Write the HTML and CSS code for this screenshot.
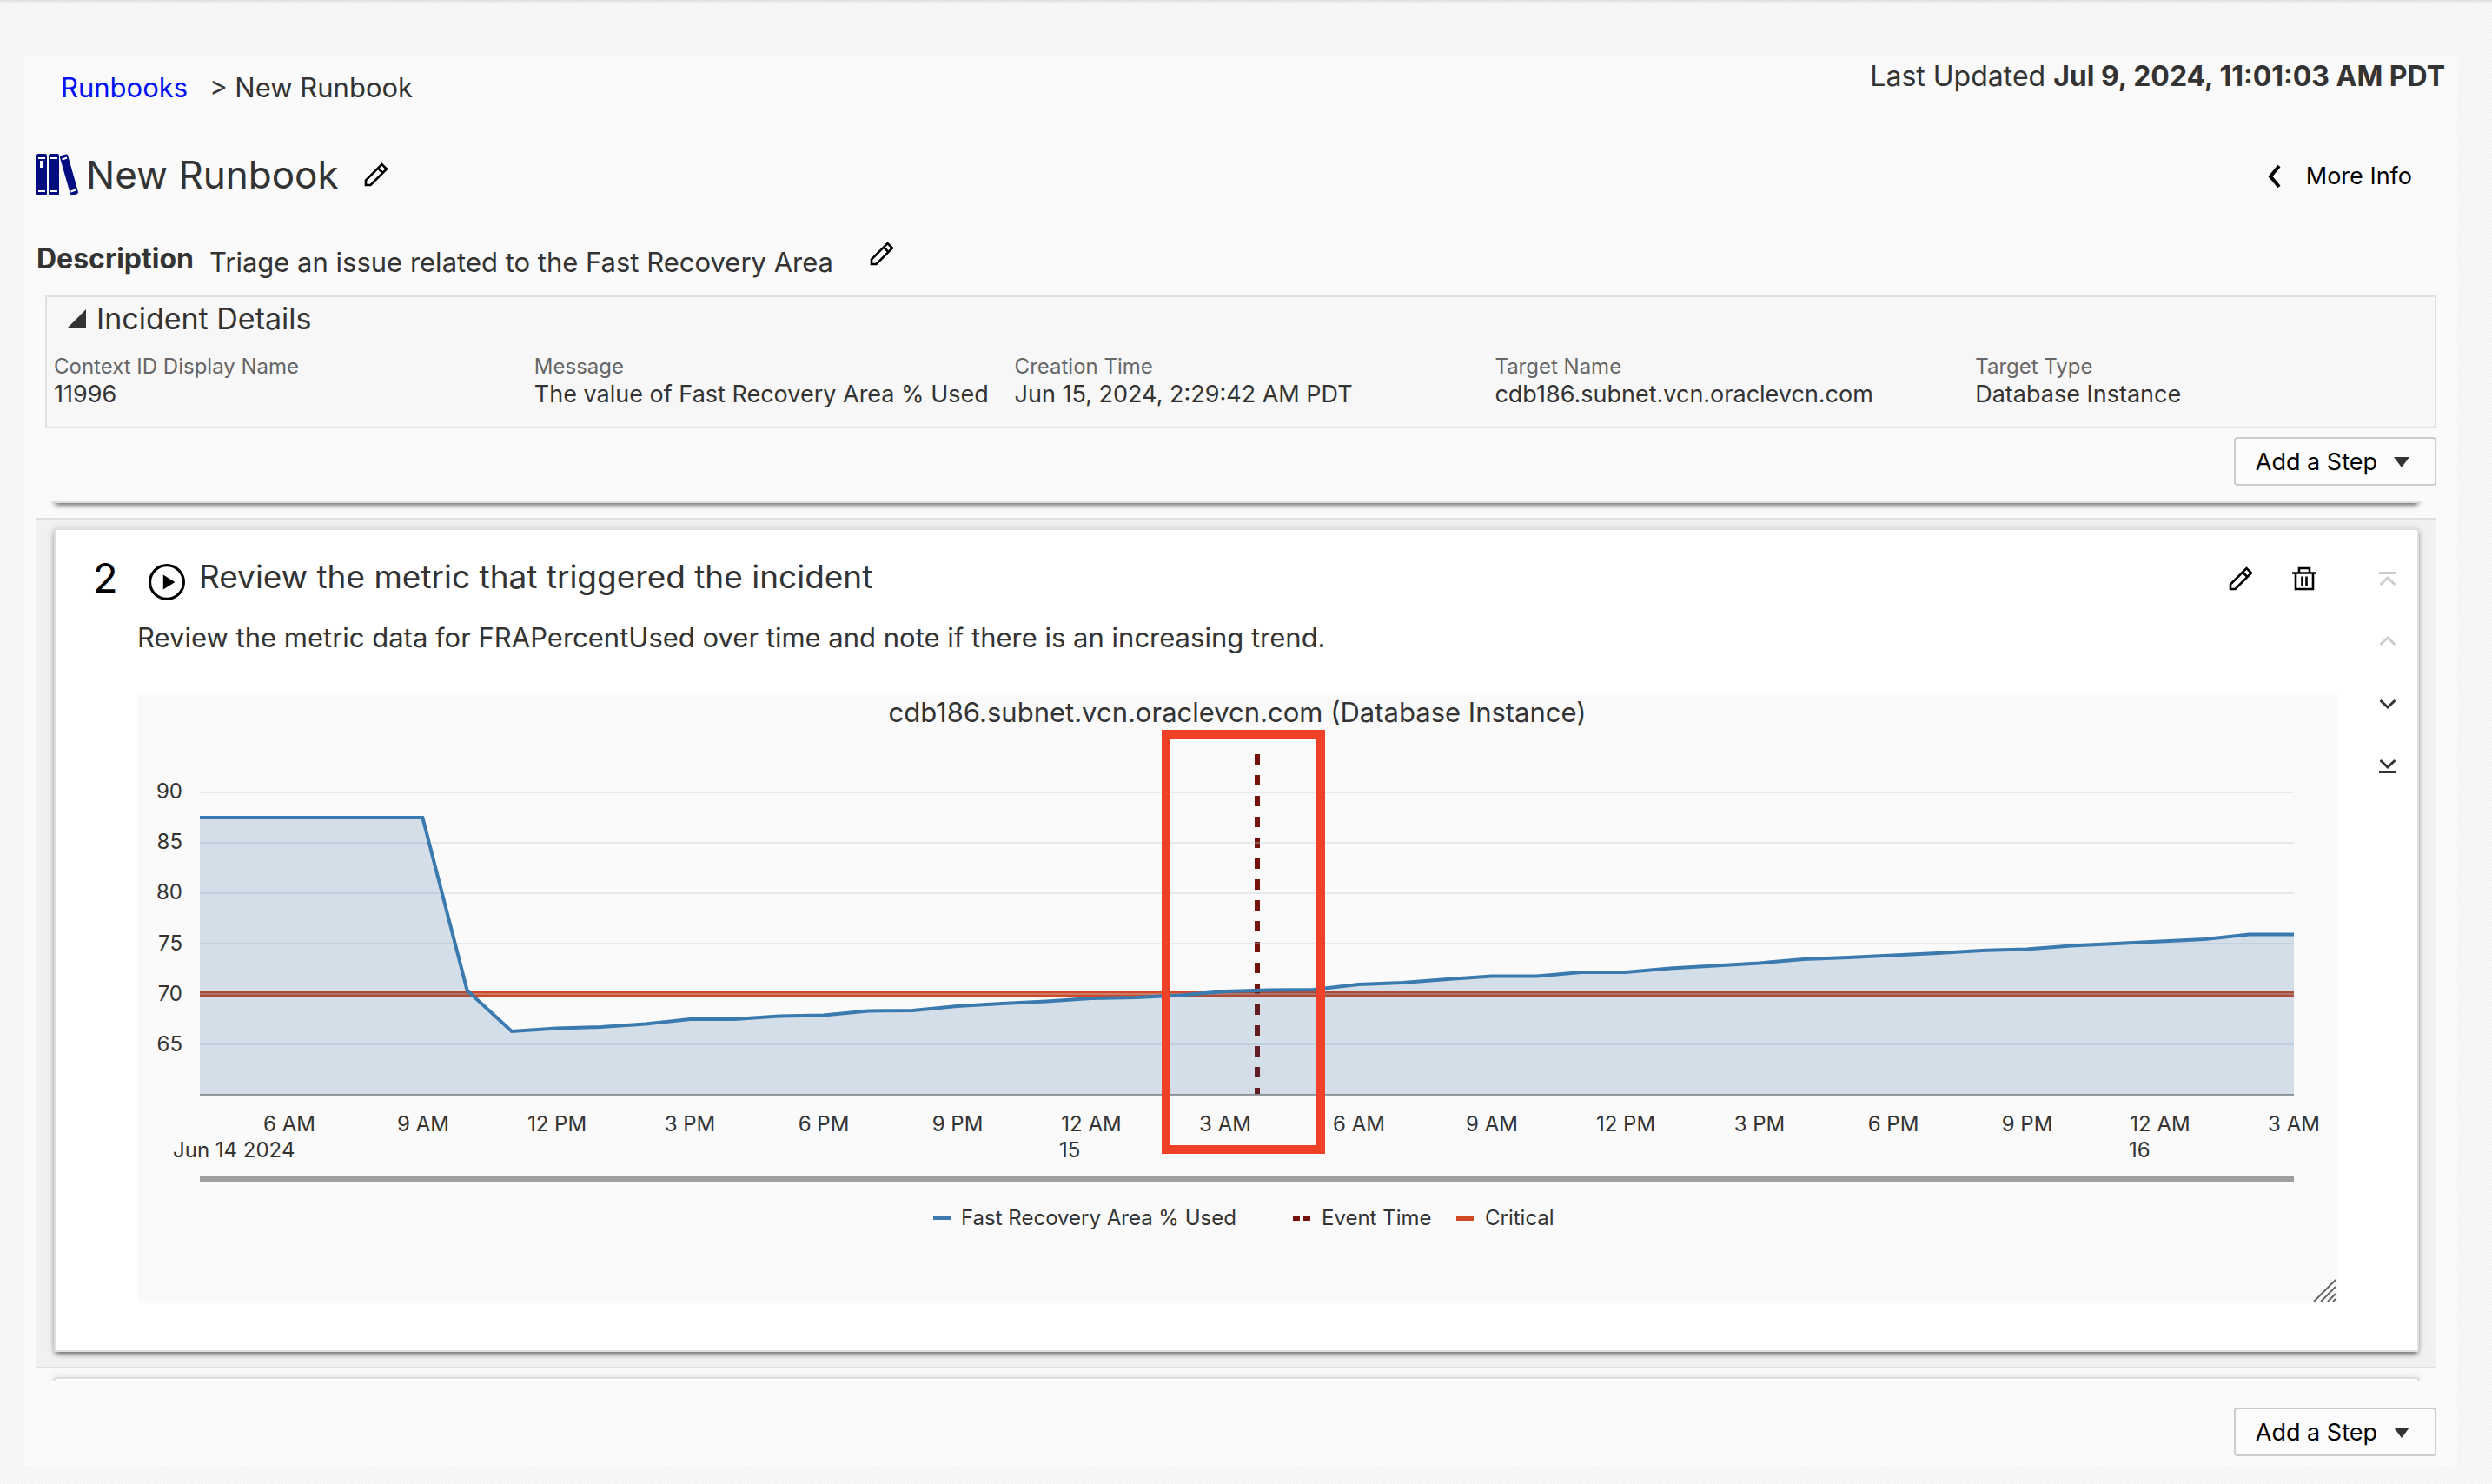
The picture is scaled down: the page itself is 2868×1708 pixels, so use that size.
FILE: index.html
```html
<!DOCTYPE html>
<html lang="en">
<head>
<meta charset="utf-8">
<meta name="viewport" content="width=device-width, initial-scale=1">
<title>New Runbook</title>
<link rel="stylesheet" href="styles.css">
</head>
<body>
<svg class="defs" aria-hidden="true">
  <symbol id="pencil" viewBox="0 0 28 28"><path d="M2 26V20.500L20.500 2L26 7.500L7.500 26ZM16 6.500L21.500 12" fill="none" stroke="#000" stroke-width="2.600"/></symbol>
  <symbol id="chevron" viewBox="0 0 20 20"><path d="M1.500 14L10 6L18.500 14" fill="none" stroke="currentColor" stroke-width="3"/></symbol>
  <symbol id="chevron-end" viewBox="0 0 20 20"><path d="M0 3.500H20M1.500 17L10 9L18.500 17" fill="none" stroke="currentColor" stroke-width="3"/></symbol>
</svg>
<main class="page">
  <header class="topbar">
    <nav class="crumbs" aria-label="Breadcrumb"><a class="crumb-link" href="#">Runbooks</a><span>&gt; New Runbook</span></nav>
    <p class="updated">Last Updated <strong>Jul 9, 2024, 11:01:03 AM PDT</strong></p>
  </header>

  <div class="title-row">
    <svg class="books" viewBox="0 0 48 48" aria-hidden="true">
      <g fill="#020d80"><rect width="12" height="48" rx="2"/><rect x="14" width="12" height="48" rx="2"/><path d="M28.500 2L34 0.500Q35.500 0 36 1.500L48 44Q48 45.500 47 46L41 48Q39.500 48 39 46.500L27 4.500Q26.500 2.500 28.500 2Z"/></g>
      <g fill="none" stroke="#fff" stroke-width="2"><path d="M2 5H10M16 5H24M2 43H10M16 43H24M29.500 6.500L35 4.500M39.500 43.500L45 41.500"/><path d="M6 8V16" stroke-width="4"/></g>
    </svg>
    <h1 class="title">New Runbook</h1>
    <button class="icon-btn" aria-label="Edit name"><svg class="icon"><use href="#pencil"/></svg></button>
    <button class="more-info"><svg class="back" viewBox="0 0 16 28" aria-hidden="true"><path d="M14 2L4 14L14 26" fill="none" stroke="#000" stroke-width="4"/></svg>More Info</button>
  </div>

  <div class="desc-row">
    <strong class="desc-label">Description</strong>
    <p class="desc-text">Triage an issue related to the Fast Recovery Area</p>
    <button class="icon-btn" aria-label="Edit description"><svg class="icon"><use href="#pencil"/></svg></button>
  </div>

  <section class="incident">
    <h2 class="incident-title"><svg class="disclose" viewBox="0 0 22 22" aria-hidden="true"><path d="M22 0V22H0Z" fill="#333"/></svg>Incident Details</h2>
    <dl class="facts">
      <div class="fact"><dt>Context ID Display Name</dt><dd>11996</dd></div>
      <div class="fact"><dt>Message</dt><dd>The value of Fast Recovery Area % Used</dd></div>
      <div class="fact"><dt>Creation Time</dt><dd>Jun 15, 2024, 2:29:42 AM PDT</dd></div>
      <div class="fact"><dt>Target Name</dt><dd>cdb186.subnet.vcn.oraclevcn.com</dd></div>
      <div class="fact"><dt>Target Type</dt><dd>Database Instance</dd></div>
    </dl>
  </section>

  <div class="actions"><button class="add-step">Add a Step<svg class="caret" viewBox="0 0 18 12" aria-hidden="true"><path d="M0 0H18L9 12Z" fill="#333"/></svg></button></div>

  <div class="steps">
    <div class="card card-prev"></div>
    <section class="step">
      <article class="card card-current">
        <div class="step-main">
          <header class="step-head">
            <span class="step-number">2</span>
            <button class="icon-btn play-btn" aria-label="Run step"><svg class="play" viewBox="0 0 40 40"><circle cx="20" cy="20" r="18.500" fill="none" stroke="#000" stroke-width="3"/><path d="M16 12L29 20L16 28Z"/></svg></button>
            <h2 class="step-title">Review the metric that triggered the incident</h2>
            <div class="step-tools">
              <button class="icon-btn" aria-label="Edit step"><svg class="icon"><use href="#pencil"/></svg></button>
              <button class="icon-btn" aria-label="Delete step"><svg class="icon" viewBox="0 0 28 28"><path d="M4 8V26H24V8M0 7.500H28M8 7V2H20V7M11.500 11.500V22M16.500 11.500V22" fill="none" stroke="#000" stroke-width="2.600"/></svg></button>
            </div>
          </header>
          <p class="step-text">Review the metric data for FRAPercentUsed over time and note if there is an increasing trend.</p>
          <figure class="chart-box">
            <svg class="chart" viewBox="158 800 2532 700" role="img" aria-label="Fast Recovery Area % Used over time">
              <text class="chart-title" x="1424" y="831" text-anchor="middle">cdb186.subnet.vcn.oraclevcn.com (Database Instance)</text>
              <path d="M230 1144H2640" stroke="#d14a25" stroke-width="6"/>
              <path d="M1447 868V1260" stroke="#75120c" stroke-width="6" stroke-dasharray="12 12"/>
              <path d="M230 912H2640M230 970H2640M230 1028H2640M230 1086H2640M230 1144H2640M230 1202H2640" stroke="#c4ced7" stroke-opacity=".38" stroke-width="2"/>
              <path d="M230 1260H2640" stroke="#9e9e9e" stroke-width="2"/>
              <g id="series"></g>
              <g class="tick" text-anchor="end">
                <text x="210" y="919">90</text><text x="210" y="977">85</text><text x="210" y="1035">80</text><text x="210" y="1094">75</text><text x="210" y="1152">70</text><text x="210" y="1210">65</text>
              </g>
              <g class="tick" text-anchor="middle">
                <text x="333" y="1302">6 AM</text><text x="487" y="1302">9 AM</text><text x="641" y="1302">12 PM</text><text x="794" y="1302">3 PM</text><text x="948" y="1302">6 PM</text><text x="1102" y="1302">9 PM</text><text x="1256" y="1302">12 AM</text><text x="1410" y="1302">3 AM</text><text x="1564" y="1302">6 AM</text><text x="1717" y="1302">9 AM</text><text x="1871" y="1302">12 PM</text><text x="2025" y="1302">3 PM</text><text x="2179" y="1302">6 PM</text><text x="2333" y="1302">9 PM</text><text x="2486" y="1302">12 AM</text><text x="2640" y="1302">3 AM</text>
              </g>
              <g class="tick"><text x="199" y="1332">Jun 14 2024</text><text x="1219" y="1332">15</text><text x="2450" y="1332">16</text></g>
              <path d="M230 1357H2640" stroke="#9e9e9e" stroke-width="6"/>
              <g class="tick">
                <path d="M1074 1402H1094" stroke="#3b7aae" stroke-width="4"/><text x="1106" y="1410">Fast Recovery Area % Used</text>
                <path d="M1488 1402H1508" stroke="#75120c" stroke-width="6" stroke-dasharray="8 4"/><text x="1521" y="1410">Event Time</text>
                <path d="M1676 1402H1696" stroke="#d14a25" stroke-width="6"/><text x="1709" y="1410">Critical</text>
              </g>
              <rect x="1342" y="845" width="178" height="478" fill="none" stroke="#ee4127" stroke-width="10"/>
              <path d="M2663 1498L2688 1473M2671 1498L2688 1481M2679 1498L2688 1489M2685 1498L2688 1495" stroke="#666" stroke-width="2"/>
            </svg>
          </figure>
        </div>
        <div class="rail">
          <button class="icon-btn" aria-label="Move to top" disabled><svg class="arrow"><use href="#chevron-end"/></svg></button>
          <button class="icon-btn" aria-label="Move up" disabled><svg class="arrow"><use href="#chevron"/></svg></button>
          <button class="icon-btn" aria-label="Move down"><svg class="arrow arrow-down"><use href="#chevron"/></svg></button>
          <button class="icon-btn" aria-label="Move to bottom"><svg class="arrow arrow-down"><use href="#chevron-end"/></svg></button>
        </div>
      </article>
    </section>
    <div class="card card-next"></div>
  </div>

  <div class="actions actions-bottom"><button class="add-step">Add a Step<svg class="caret" viewBox="0 0 18 12" aria-hidden="true"><path d="M0 0H18L9 12Z" fill="#333"/></svg></button></div>
</main>
<script src="chart.js"></script>
</body>
</html>
```
FILE: styles.css
```css
* { box-sizing: border-box; }

body {
  margin: 0;
  min-height: 100vh;
  padding: 64px 40px 20px 28px;
  color: #333;
  font: 31px/40px Inter, "Liberation Sans", sans-serif;
  background:
    linear-gradient(#dedede, transparent) 0 0 / 100% 4px no-repeat,
    linear-gradient(45deg, #f3f3f3 25%, #f9f9f9 25% 50%, #f3f3f3 50% 75%, #f9f9f9 75%) 0 0 / 4px 4px;
}

h1, h2, p, dl, dd, figure { margin: 0; font-weight: 400; }
button { font: inherit; color: #000; cursor: pointer; }
svg { display: block; }
.defs { position: absolute; width: 0; height: 0; }

.page { padding: 0 24px 12px 14px; background: #fafafa; }

.topbar { display: flex; justify-content: space-between; height: 96px; margin-right: -10px; }
.crumbs { display: flex; gap: 25px; padding: 17px 0 0 28px; }
.crumb-link { color: #0010f5; text-decoration: none; }
.updated { padding-top: 4px; font-size: 32px; }
strong { font-weight: 700; }

.icon-btn { padding: 0; border: 0; background: none; }
.icon { width: 28px; height: 28px; }

.title-row { display: flex; align-items: center; height: 82px; }
.books { width: 48px; height: 48px; }
.title { margin: 0 29px 0 9px; font-size: 44px; line-height: 56px; }
.more-info {
  display: flex;
  align-items: center;
  gap: 29px;
  margin-left: auto;
  padding: 3px 28px 0 0;
  border: 0;
  background: none;
  font-size: 27px;
}
.back { width: 16px; height: 28px; }

.desc-row { display: flex; align-items: flex-start; height: 98px; padding-top: 36px; }
.desc-label { margin-right: 18px; font-size: 32px; }
.desc-text { padding-top: 4px; margin-right: 42px; }

.incident { height: 153px; margin-left: 10px; border: 2px solid #e0e0e0; background: #f7f7f7; }
.incident-title { display: flex; align-items: center; gap: 12px; padding: 3px 0 0 23px; font-size: 34px; line-height: 44px; }
.disclose { width: 22px; height: 22px; }
.facts { display: grid; grid-template-columns: repeat(5, 1fr); padding: 17px 0 0 8px; margin-right: -24px; }
.fact { padding-right: 30px; white-space: nowrap; overflow: hidden; }
.fact dt { color: #666; font-size: 24px; line-height: 32px; }
.fact dd { font-size: 27px; line-height: 32px; overflow: hidden; }

.actions { display: flex; justify-content: flex-end; padding: 10px 0 18px; }
.actions-bottom { padding: 30px 0 0; }
.add-step {
  display: flex;
  align-items: center;
  gap: 19px;
  height: 56px;
  padding: 2px 29px 0 23px;
  border: 2px solid #ccc;
  border-radius: 4px;
  background: #fcfcfc;
  font-size: 27px;
}
.caret { width: 18px; height: 12px; }

.steps { height: 1013px; overflow: hidden; }
.card {
  margin: 0 20px;
  border: 2px solid #dfdfdf;
  border-radius: 2px;
  background: #fff;
  box-shadow: 0 4px 6px -2px rgba(0, 0, 0, .6), 0 0 10px rgba(0, 0, 0, .13);
}
.card-prev { height: 40px; margin-top: -38px; margin-bottom: 17px; }
.card-next { height: 60px; margin-top: 10px; }
.step { padding: 10px 0 17px; border: solid #e0e0e0; border-width: 2px 0; background: #f1f1f1; }
.card-current { display: flex; padding: 24px 0 54px; }

.step-main { flex: 1; min-width: 0; padding-left: 94px; }
.step-head { display: flex; align-items: center; margin-left: -51px; height: 64px; }
.step-number { width: 64px; padding-bottom: 2px; color: #000; font-size: 47px; line-height: 56px; }
.play-btn { padding-top: 8px; margin-right: 16px; }
.play { width: 42px; height: 42px; }
.step-title { font-size: 37px; line-height: 48px; padding-bottom: 5px; }
.step-tools { display: flex; gap: 45px; margin-left: auto; padding-right: 24px; }
.step-text { padding: 16px 0 46px; }
.chart-box { background: #fafafa; }
.chart { width: 100%; height: auto; }
.chart text { fill: #333; }
.chart-title { font-size: 31px; }
.tick { font-size: 24px; }

.rail { display: flex; flex-direction: column; align-items: center; gap: 52px; width: 92px; padding: 22px 0 0 23px; }
.arrow { width: 20px; height: 20px; color: #333; }
.arrow-down { transform: rotate(180deg); }
.icon-btn:disabled .arrow { color: #ccc; }
```
FILE: chart.js
```js
// Hourly readings, one per hour from 4 AM on Jun 14, as heights on the chart canvas.
const heights = [941, 941, 941, 941, 941, 941, 1140, 1187, 1183.5, 1182, 1178.5, 1173, 1173, 1169.5, 1168.5,
  1163.5, 1163, 1158, 1155, 1152.5, 1149, 1148, 1145.5, 1141, 1139.5, 1139, 1133, 1131, 1127, 1123.5, 1123.5,
  1119, 1119, 1114.5, 1111.5, 1108.5, 1104, 1102, 1099.5, 1097, 1094, 1092.5, 1088.5, 1086, 1083.5, 1081, 1075.5, 1075.5];
const left = 230, right = 2640, base = 1260;
const step = (right - left) / (heights.length - 1);
const line = heights.map((y, i) => `${i ? 'L' : 'M'}${left + i * step} ${y}`).join('');
document.getElementById('series').innerHTML =
  `<path d="${line}V${base}H${left}Z" fill="rgb(15,82,150)" fill-opacity=".17"/>` +
  `<path d="${line}" fill="none" stroke="#3b7aae" stroke-width="4"/>`;
```
